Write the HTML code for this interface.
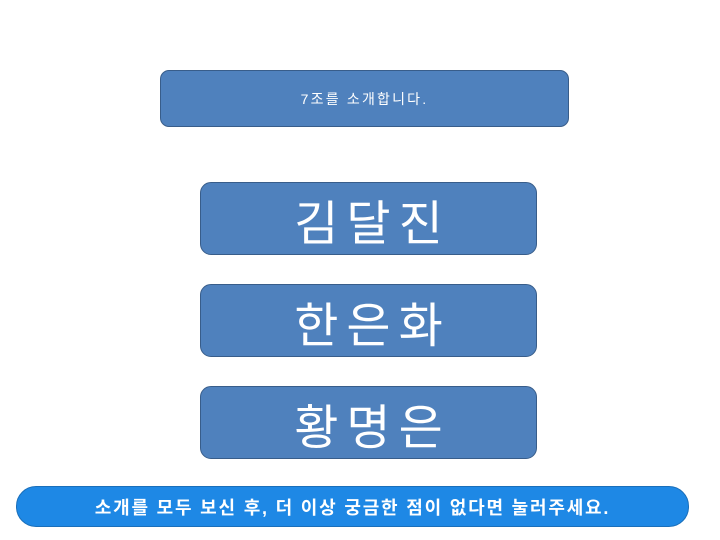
<!DOCTYPE html>
<html><head><meta charset="utf-8"><style>
body{margin:0;width:720px;height:540px;background:#fff;position:relative;overflow:hidden;font-family:"Liberation Sans","Noto Sans CJK KR",sans-serif;}
.b{position:absolute;box-sizing:border-box;background:#4f81bd;border:1px solid #385d8a;color:#fff;display:flex;align-items:center;justify-content:center;}
.t{left:160px;top:70px;width:409px;height:57px;border-radius:9px;font-size:14px;letter-spacing:2.2px;}
.n{left:200px;width:337px;height:73px;border-radius:11px;font-size:48px;letter-spacing:8px;padding-left:8px;}
.f{left:16px;top:486px;width:673px;height:41px;border-radius:20px;background:#1e88e5;border-color:#1a6fba;font-size:18px;font-weight:bold;letter-spacing:1.8px;}
</style></head><body>
<div class="b t">7조를 소개합니다.</div>
<div class="b n" style="top:182px">김달진</div>
<div class="b n" style="top:284px">한은화</div>
<div class="b n" style="top:386px">황명은</div>
<div class="b f">소개를 모두 보신 후, 더 이상 궁금한 점이 없다면 눌러주세요.</div>
</body></html>
